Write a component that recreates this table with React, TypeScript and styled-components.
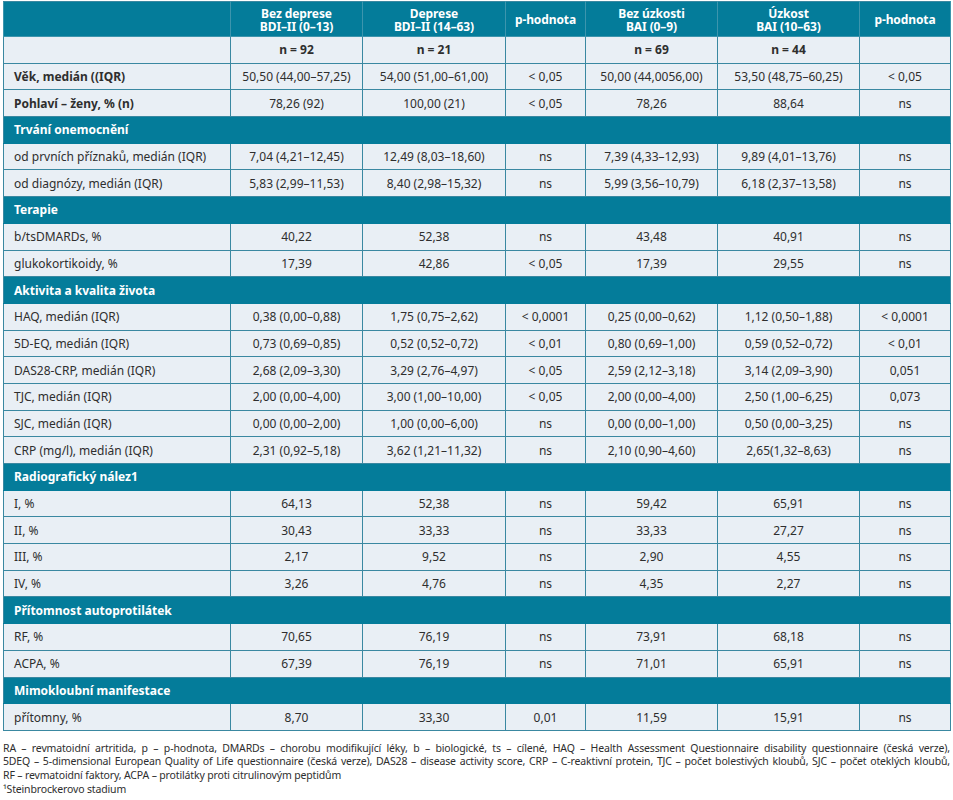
import React from 'react';
import styled, { createGlobalStyle } from 'styled-components';

const GlobalStyle = createGlobalStyle`
  html, body {
    margin: 0;
    padding: 0;
    background: #ffffff;
  }

  body {
    font-family: 'Noto Sans', 'Open Sans', sans-serif;
    color: #2e2e2e;
  }
`;

const teal = '#047c9a';
const cellBg = '#e9eff5';
const line = '#3a88a1';

const Page = styled.div`
  width: 947px;
  padding: 1px 3px 0 3px;
`;

const Table = styled.table`
  width: 947px;
  border-collapse: collapse;
  table-layout: fixed;
  font-size: 12px;
  line-height: 16px;
  border: 1px solid ${line};
`;

const HeadCell = styled.th`
  background: ${teal};
  color: #ffffff;
  font-weight: 700;
  height: 32px;
  padding: 2px 4px 0;
  line-height: 13.5px;
  text-align: center;
  vertical-align: middle;
  border: 1px solid #3d95ad;
  border-top-color: ${line};
  letter-spacing: -0.1px;
`;

const Cell = styled.td<{ $label?: boolean; $bold?: boolean }>`
  background: ${cellBg};
  height: 24.7px;
  padding: 1px ${(p) => (p.$label ? '10px' : '4px')} 0;
  text-align: ${(p) => (p.$label ? 'left' : 'center')};
  font-weight: ${(p) => (p.$bold ? 700 : 400)};
  border: 1px solid ${line};
  white-space: nowrap;
  vertical-align: middle;
`;

const SectionCell = styled.td`
  background: ${teal};
  color: #ffffff;
  font-weight: 700;
  height: 24.7px;
  padding: 1px 10px 0;
  text-align: left;
  border: 1px solid ${teal};
  border-left-color: ${line};
  border-right-color: ${line};
`;

const Notes = styled.div`
  margin-top: 11px;
  font-size: 10.5px;
  line-height: 13.6px;
  color: #2e2e2e;
  letter-spacing: -0.15px;
`;

const NoteLine = styled.div<{ $justify?: boolean }>`
  text-align: ${(p) => (p.$justify ? 'justify' : 'left')};
  text-align-last: ${(p) => (p.$justify ? 'justify' : 'left')};
  white-space: nowrap;
`;

const widths = [227, 132, 143, 80, 132, 142, 91];

type Row = { kind: 'section'; title: string } | { kind: 'data'; cells: string[]; bold?: boolean };

const rows: Row[] = [
  { kind: 'data', cells: ['', 'n = 92', 'n = 21', '', 'n = 69', 'n = 44', ''], bold: true },
  { kind: 'data', cells: ['Věk, medián ((IQR)', '50,50 (44,00–57,25)', '54,00 (51,00–61,00)', '< 0,05', '50,00 (44,0056,00)', '53,50 (48,75–60,25)', '< 0,05'], bold: true },
  { kind: 'data', cells: ['Pohlaví – ženy, % (n)', '78,26 (92)', '100,00 (21)', '< 0,05', '78,26', '88,64', 'ns'], bold: true },
  { kind: 'section', title: 'Trvání onemocnění' },
  { kind: 'data', cells: ['od prvních příznaků, medián (IQR)', '7,04 (4,21–12,45)', '12,49 (8,03–18,60)', 'ns', '7,39 (4,33–12,93)', '9,89 (4,01–13,76)', 'ns'] },
  { kind: 'data', cells: ['od diagnózy, medián (IQR)', '5,83 (2,99–11,53)', '8,40 (2,98–15,32)', 'ns', '5,99 (3,56–10,79)', '6,18 (2,37–13,58)', 'ns'] },
  { kind: 'section', title: 'Terapie' },
  { kind: 'data', cells: ['b/tsDMARDs, %', '40,22', '52,38', 'ns', '43,48', '40,91', 'ns'] },
  { kind: 'data', cells: ['glukokortikoidy, %', '17,39', '42,86', '< 0,05', '17,39', '29,55', 'ns'] },
  { kind: 'section', title: 'Aktivita a kvalita života' },
  { kind: 'data', cells: ['HAQ, medián (IQR)', '0,38 (0,00–0,88)', '1,75 (0,75–2,62)', '< 0,0001', '0,25 (0,00–0,62)', '1,12 (0,50–1,88)', '< 0,0001'] },
  { kind: 'data', cells: ['5D-EQ, medián (IQR)', '0,73 (0,69–0,85)', '0,52 (0,52–0,72)', '< 0,01', '0,80 (0,69–1,00)', '0,59 (0,52–0,72)', '< 0,01'] },
  { kind: 'data', cells: ['DAS28-CRP, medián (IQR)', '2,68 (2,09–3,30)', '3,29 (2,76–4,97)', '< 0,05', '2,59 (2,12–3,18)', '3,14 (2,09–3,90)', '0,051'] },
  { kind: 'data', cells: ['TJC, medián (IQR)', '2,00 (0,00–4,00)', '3,00 (1,00–10,00)', '< 0,05', '2,00 (0,00–4,00)', '2,50 (1,00–6,25)', '0,073'] },
  { kind: 'data', cells: ['SJC, medián (IQR)', '0,00 (0,00–2,00)', '1,00 (0,00–6,00)', 'ns', '0,00 (0,00–1,00)', '0,50 (0,00–3,25)', 'ns'] },
  { kind: 'data', cells: ['CRP (mg/l), medián (IQR)', '2,31 (0,92–5,18)', '3,62 (1,21–11,32)', 'ns', '2,10 (0,90–4,60)', '2,65(1,32–8,63)', 'ns'] },
  { kind: 'section', title: 'Radiografický nález1' },
  { kind: 'data', cells: ['I, %', '64,13', '52,38', 'ns', '59,42', '65,91', 'ns'] },
  { kind: 'data', cells: ['II, %', '30,43', '33,33', 'ns', '33,33', '27,27', 'ns'] },
  { kind: 'data', cells: ['III, %', '2,17', '9,52', 'ns', '2,90', '4,55', 'ns'] },
  { kind: 'data', cells: ['IV, %', '3,26', '4,76', 'ns', '4,35', '2,27', 'ns'] },
  { kind: 'section', title: 'Přítomnost autoprotilátek' },
  { kind: 'data', cells: ['RF, %', '70,65', '76,19', 'ns', '73,91', '68,18', 'ns'] },
  { kind: 'data', cells: ['ACPA, %', '67,39', '76,19', 'ns', '71,01', '65,91', 'ns'] },
  { kind: 'section', title: 'Mimokloubní manifestace' },
  { kind: 'data', cells: ['přítomny, %', '8,70', '33,30', '0,01', '11,59', '15,91', 'ns'] },
];

const headers: [string, string?][] = [
  [''],
  ['Bez deprese', 'BDI–II (0–13)'],
  ['Deprese', 'BDI–II (14–63)'],
  ['p-hodnota'],
  ['Bez úzkosti', 'BAI (0–9)'],
  ['Úzkost', 'BAI (10–63)'],
  ['p-hodnota'],
];

export default function App() {
  return (
    <Page>
      <GlobalStyle />
      <Table>
        <colgroup>
          {widths.map((w, i) => (
            <col key={i} style={{ width: w }} />
          ))}
        </colgroup>
        <thead>
          <tr>
            {headers.map(([a, b], i) => (
              <HeadCell key={i}>
                {a}
                {b && <br />}
                {b}
              </HeadCell>
            ))}
          </tr>
        </thead>
        <tbody>
          {rows.map((row, i) =>
            row.kind === 'section' ? (
              <tr key={i}>
                <SectionCell colSpan={7}>{row.title}</SectionCell>
              </tr>
            ) : (
              <tr key={i}>
                {row.cells.map((c, j) => (
                  <Cell key={j} $label={j === 0} $bold={row.bold && (j === 0 || i === 0)}>
                    {c}
                  </Cell>
                ))}
              </tr>
            )
          )}
        </tbody>
      </Table>
      <Notes>
        <NoteLine $justify>
          RA – revmatoidní artritida, p – p-hodnota, DMARDs – chorobu modifikující léky, b – biologické, ts – cílené, HAQ – Health
          Assessment Questionnaire disability questionnaire (česká verze),
        </NoteLine>
        <NoteLine $justify>
          5DEQ – 5-dimensional European Quality of Life questionnaire (česká verze), DAS28 – disease activity score, CRP – C-reaktivní
          protein, TJC – počet bolestivých kloubů, SJC – počet oteklých kloubů,
        </NoteLine>
        <NoteLine>RF – revmatoidní faktory, ACPA – protilátky proti citrulinovým peptidům</NoteLine>
        <NoteLine>¹Steinbrockerovo stadium</NoteLine>
      </Notes>
    </Page>
  );
}
